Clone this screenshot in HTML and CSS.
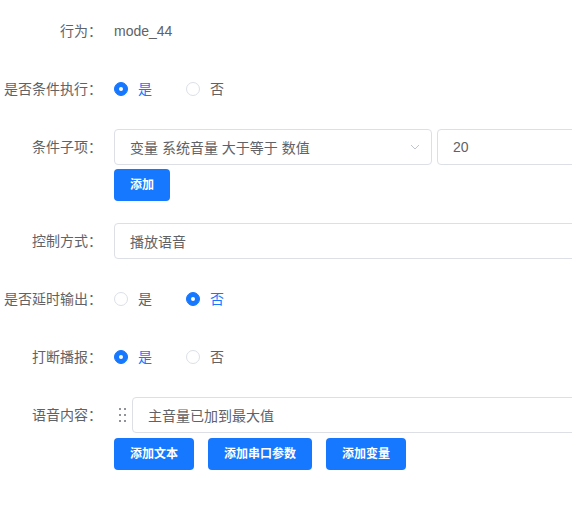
FILE: index.html
```html
<!DOCTYPE html>
<html lang="zh-CN">
<head>
<meta charset="utf-8">
<title>form</title>
<link rel="stylesheet" href="styles.css">
</head>
<body>
<form class="form">
  <div class="item">
    <label class="label">行为：</label>
    <div class="content"><span class="text">mode_44</span></div>
  </div>

  <div class="item">
    <label class="label">是否条件执行：</label>
    <div class="content">
      <div class="radio-group">
        <span class="radio checked"><span class="dot"></span><span class="rlabel">是</span></span>
        <span class="radio"><span class="dot"></span><span class="rlabel">否</span></span>
      </div>
    </div>
  </div>

  <div class="item">
    <label class="label">条件子项：</label>
    <div class="content stack">
      <div class="cond-row">
        <div class="select">
          <span class="select-text">变量 系统音量 大于等于 数值</span>
          <svg class="arrow" width="10" height="6" viewBox="0 0 10 6"><path d="M1 1 L5 5 L9 1" fill="none" stroke="#c0c4cc" stroke-width="1"/></svg>
        </div>
        <div class="input value-input"><span>20</span></div>
      </div>
      <div class="btns gap4"><button type="button" class="btn">添加</button></div>
    </div>
  </div>

  <div class="item">
    <label class="label">控制方式：</label>
    <div class="content">
      <div class="input wide"><span>播放语音</span></div>
    </div>
  </div>

  <div class="item">
    <label class="label">是否延时输出：</label>
    <div class="content">
      <div class="radio-group">
        <span class="radio"><span class="dot"></span><span class="rlabel">是</span></span>
        <span class="radio checked"><span class="dot"></span><span class="rlabel">否</span></span>
      </div>
    </div>
  </div>

  <div class="item">
    <label class="label">打断播报：</label>
    <div class="content">
      <div class="radio-group">
        <span class="radio checked"><span class="dot"></span><span class="rlabel">是</span></span>
        <span class="radio"><span class="dot"></span><span class="rlabel">否</span></span>
      </div>
    </div>
  </div>

  <div class="item">
    <label class="label">语音内容：</label>
    <div class="content stack">
      <div class="voice-row">
        <span class="handle">
          <svg width="8" height="14" viewBox="0 0 8 14">
            <rect x="0" y="0" width="2" height="2" fill="#909399"/>
            <rect x="5" y="0" width="2" height="2" fill="#909399"/>
            <rect x="0" y="6" width="2" height="2" fill="#909399"/>
            <rect x="5" y="6" width="2" height="2" fill="#909399"/>
            <rect x="0" y="12" width="2" height="2" fill="#909399"/>
            <rect x="5" y="12" width="2" height="2" fill="#909399"/>
          </svg>
        </span>
        <div class="input voice-input"><span>主音量已加到最大值</span></div>
      </div>
      <div class="btns gap5">
        <button type="button" class="btn">添加文本</button>
        <button type="button" class="btn">添加串口参数</button>
        <button type="button" class="btn">添加变量</button>
      </div>
    </div>
  </div>
</form>
</body>
</html>
```

FILE: styles.css
```css
html, body {
  margin: 0;
  padding: 0;
  background: #ffffff;
  overflow: hidden;
}

body {
  font-family: "Liberation Sans", "Noto Sans CJK SC", sans-serif;
  font-size: 14px;
  color: #606266;
}

.form {
  width: 760px;
  padding-top: 13px;
}

.item {
  display: flex;
  align-items: flex-start;
  margin-bottom: 22px;
}

.label {
  width: 102px;
  padding-right: 12px;
  flex: none;
  text-align: right;
  line-height: 36px;
  height: 36px;
  color: #606266;
  white-space: nowrap;
}

.content {
  flex: 1;
  min-height: 36px;
  display: flex;
  align-items: center;
}

.content.stack {
  flex-direction: column;
  align-items: stretch;
}

.text {
  line-height: 36px;
  color: #606266;
}

.radio-group {
  display: flex;
  align-items: center;
  height: 36px;
}

.radio {
  display: inline-flex;
  align-items: center;
  margin-right: 34px;
  color: #606266;
}

.radio .dot {
  width: 14px;
  height: 14px;
  box-sizing: border-box;
  border: 1px solid #dcdfe6;
  border-radius: 50%;
  background: #fff;
  position: relative;
}

.radio.checked .dot {
  border-color: #1677ff;
  background: #1677ff;
}

.radio.checked .dot::after {
  content: "";
  position: absolute;
  width: 4px;
  height: 4px;
  border-radius: 50%;
  background: #fff;
  left: 4px;
  top: 4px;
}

.rlabel {
  margin-left: 10px;
  line-height: 14px;
}

.radio.checked .rlabel {
  color: #1677ff;
}

.cond-row {
  display: flex;
  gap: 5px;
}

.select {
  width: 318px;
  height: 36px;
  box-sizing: border-box;
  border: 1px solid #dcdfe6;
  border-radius: 4px;
  display: flex;
  align-items: center;
  padding: 0 10px 0 15px;
  color: #606266;
}

.select-text {
  flex: 1;
}

.arrow {
  margin-right: 1px;
}

.input {
  height: 36px;
  box-sizing: border-box;
  border: 1px solid #dcdfe6;
  border-radius: 4px;
  display: flex;
  align-items: center;
  padding: 0 15px;
  color: #606266;
}

.value-input {
  width: 240px;
}

.wide {
  width: 560px;
}

.voice-row {
  display: flex;
  align-items: center;
}

.handle {
  width: 18px;
  flex: none;
  display: flex;
  justify-content: flex-start;
  padding-left: 5px;
  box-sizing: border-box;
  height: 36px;
  align-items: center;
}

.voice-input {
  width: 560px;
}

.btns {
  display: flex;
  gap: 14px;
}

.gap4 { margin-top: 4px; }
.gap5 { margin-top: 5px; }

.btn {
  height: 32px;
  padding: 0 16px;
  border: none;
  border-radius: 4px;
  background: #1677ff;
  color: #ffffff;
  font-family: "Liberation Sans", "Noto Sans CJK SC", sans-serif;
  font-size: 12px;
  font-weight: bold;
  line-height: 32px;
  cursor: pointer;
}
```
